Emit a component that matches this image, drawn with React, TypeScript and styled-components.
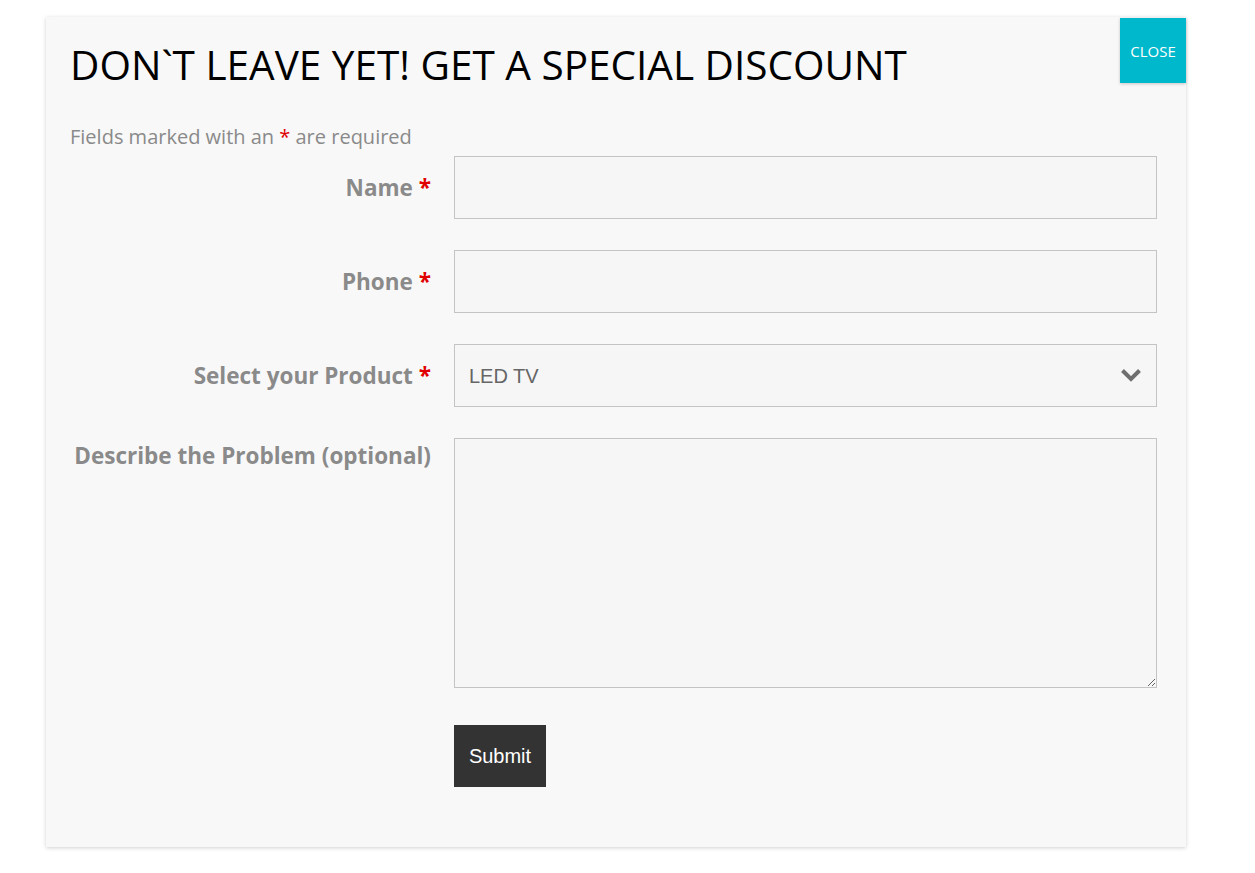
import React, {useState} from 'react';
import styled, {createGlobalStyle} from 'styled-components';

const GlobalStyle = createGlobalStyle`
    html, body {
        margin: 0;
        padding: 0;
        background: #ffffff;
    }
    body {
        font-family: 'Open Sans', 'Liberation Sans', sans-serif;
    }
`;

const Page = styled.div`
    width: 1255px;
    height: 873px;
    padding: 17px 0 0 46px;
    box-sizing: border-box;
`;

const Popup = styled.div`
    position: relative;
    width: 1140px;
    height: 830px;
    box-sizing: border-box;
    background-color: #f8f8f8;
    box-shadow: 0 1px 4px rgba(0, 0, 0, 0.18);
    padding: 23px 29px 0 24px;
`;

const CloseButton = styled.button`
    position: absolute;
    top: 1px;
    right: 0;
    width: 66px;
    height: 65px;
    border: none;
    background-color: #00b8cc;
    color: #ffffff;
    font-family: 'Open Sans', sans-serif;
    font-size: 15px;
    cursor: pointer;
    box-shadow: 0 1px 3px rgba(0, 0, 0, 0.2);
`;

const Title = styled.h2`
    margin: 0;
    font-family: 'Open Sans', sans-serif;
    font-weight: 400;
    font-size: 40.5px;
    line-height: 50px;
    color: #000000;
`;

const Note = styled.p`
    margin: 34px 0 0;
    font-size: 20px;
    line-height: 26px;
    color: #8a8a8a;
`;

const Star = styled.span`
    color: #e00000;
`;

const Form = styled.form`
    display: flex;
    flex-direction: column;
    gap: 31px;
    margin-top: 6px;
`;

const Row = styled.div<{$top?: boolean}>`
    display: grid;
    grid-template-columns: 361px 703px;
    column-gap: 23px;
    align-items: ${(p) => (p.$top ? 'start' : 'center')};
`;

const Label = styled.label<{$top?: boolean}>`
    text-align: right;
    font-weight: 700;
    font-size: 22.5px;
    line-height: 30px;
    color: #8a8a8a;
    padding-top: ${(p) => (p.$top ? '3px' : '0')};
`;

const fieldBase = `
    box-sizing: border-box;
    width: 100%;
    border: 1px solid #c4c4c4;
    background-color: #f6f6f6;
    font-family: 'Liberation Sans', Arial, sans-serif;
    font-size: 20px;
    color: #666666;
    outline: none;
`;

const Input = styled.input`
    ${fieldBase}
    height: 63px;
    padding: 0 14px;
`;

const SelectWrap = styled.div`
    position: relative;
`;

const Select = styled.select`
    ${fieldBase}
    height: 63px;
    padding: 0 14px;
    appearance: none;
    -webkit-appearance: none;
`;

const Chevron = styled.svg`
    position: absolute;
    right: 15px;
    top: 23px;
    pointer-events: none;
`;

const TextArea = styled.textarea`
    ${fieldBase}
    height: 250px;
    padding: 14px;
    resize: vertical;
`;

const SubmitButton = styled.button`
    width: 92px;
    height: 62px;
    border: none;
    background-color: #333333;
    color: #ffffff;
    font-family: 'Liberation Sans', Arial, sans-serif;
    font-size: 20px;
    cursor: pointer;
    margin-top: 6px;
`;

export default function App(): JSX.Element {
    const [name, setName] = useState('');
    const [phone, setPhone] = useState('');
    const [product, setProduct] = useState('LED TV');
    const [problem, setProblem] = useState('');

    return (
        <Page>
            <GlobalStyle />
            <Popup>
                <CloseButton type="button">CLOSE</CloseButton>
                <Title>DON`T LEAVE YET! GET A SPECIAL DISCOUNT</Title>
                <Note>
                    Fields marked with an <Star>*</Star> are required
                </Note>
                <Form onSubmit={(e) => e.preventDefault()}>
                    <Row>
                        <Label>
                            Name <Star>*</Star>
                        </Label>
                        <Input value={name} onChange={(e) => setName(e.target.value)} />
                    </Row>
                    <Row>
                        <Label>
                            Phone <Star>*</Star>
                        </Label>
                        <Input value={phone} onChange={(e) => setPhone(e.target.value)} />
                    </Row>
                    <Row>
                        <Label>
                            Select your Product <Star>*</Star>
                        </Label>
                        <SelectWrap>
                            <Select value={product} onChange={(e) => setProduct(e.target.value)}>
                                <option>LED TV</option>
                                <option>Washing Machine</option>
                                <option>Refrigerator</option>
                            </Select>
                            <Chevron width="22" height="16" viewBox="0 0 22 16">
                                <path d="M2.5 3.5 L11 12 L19.5 3.5" fill="none" stroke="#6f6f6f" strokeWidth="4" />
                            </Chevron>
                        </SelectWrap>
                    </Row>
                    <Row $top>
                        <Label $top>Describe the Problem (optional)</Label>
                        <TextArea value={problem} onChange={(e) => setProblem(e.target.value)} />
                    </Row>
                    <Row>
                        <span />
                        <div>
                            <SubmitButton type="submit">Submit</SubmitButton>
                        </div>
                    </Row>
                </Form>
            </Popup>
        </Page>
    );
}
